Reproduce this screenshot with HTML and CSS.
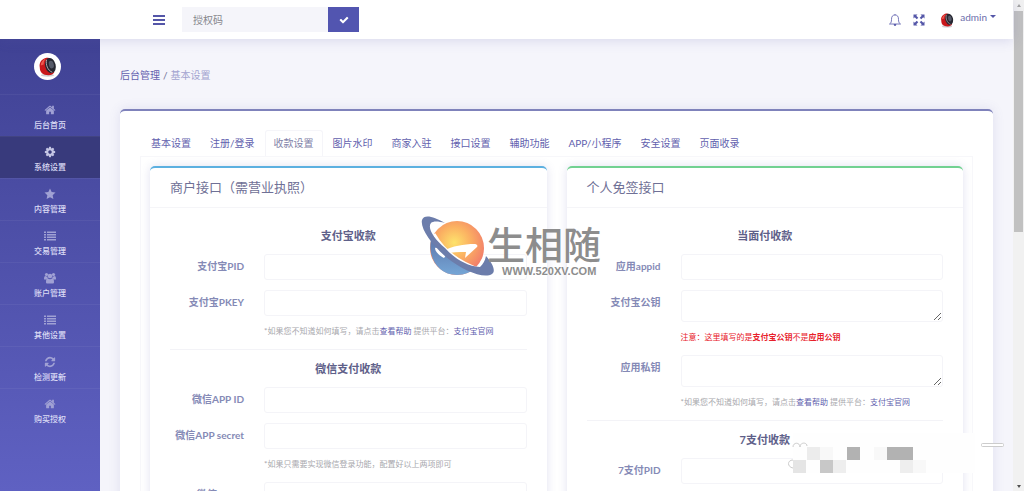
FILE: index.html
```html
<!DOCTYPE html>
<html lang="zh-CN">

<head>
    <meta charset="UTF-8">
    <meta name="viewport" content="width=device-width, initial-scale=1.0">
    <title>基本设置 - 后台管理</title>
    <link rel="stylesheet" href="styles.css">
</head>

<body>
    <!-- shared icons -->
    <svg class="sprite" aria-hidden="true">
        <symbol id="i-home" viewBox="0 0 1792 1792"><path d="M1472 992v480q0 26-19 45t-45 19h-384v-384h-256v384h-384q-26 0-45-19t-19-45v-480q0-1 .5-3t.5-3l575-474 575 474q1 2 1 6zm223-69l-62 74q-8 9-21 11h-3q-13 0-21-7l-692-577-692 577q-12 8-24 7-13-2-21-11l-62-74q-8-10-7-23.5t11-21.5l719-599q32-26 76-26t76 26l244 204v-195q0-14 9-23t23-9h192q14 0 23 9t9 23v408l219 182q10 8 11 21.5t-7 23.5z"/></symbol>
        <symbol id="i-cog" viewBox="0 0 1792 1792"><path d="M1152 896q0-106-75-181t-181-75-181 75-75 181 75 181 181 75 181-75 75-181zm512-109v222q0 12-8 23t-20 13l-185 28q-19 54-39 91 35 50 107 138 10 12 10 25t-9 23q-27 37-99 108t-94 71q-12 0-26-9l-138-108q-44 23-91 38-16 136-29 186-7 28-36 28h-222q-14 0-24.5-8.5t-11.5-21.5l-28-184q-49-16-90-37l-141 107q-10 9-25 9-14 0-25-11-126-114-165-168-7-10-7-23 0-12 8-23 15-21 51-66.5t54-70.5q-27-50-41-99l-183-27q-13-2-21-12.5t-8-23.5v-222q0-12 8-23t19-13l186-28q14-46 39-92-40-57-107-138-10-12-10-24 0-10 9-23 26-36 98.5-107.5t94.5-71.5q13 0 26 10l138 107q44-23 91-38 16-136 29-186 7-28 36-28h222q14 0 24.5 8.5t11.5 21.5l28 184q49 16 90 37l142-107q9-9 24-9 13 0 25 10 129 119 165 170 7 8 7 22 0 12-8 23-15 21-51 66.5t-54 70.5q26 50 41 98l183 28q13 2 21 12.5t8 23.5z"/></symbol>
        <symbol id="i-star" viewBox="0 0 24 24"><path d="M12 1l3.300 7.200 7.700.9-5.700 5.300 1.500 7.800L12 18.400l-6.800 3.800 1.500-7.800L1 9.100l7.700-.9z"/></symbol>
        <symbol id="i-list" viewBox="0 0 24 24"><path d="M0 3h4v3H0zM6 3h18v3H6zM0 8h4v3H0zM6 8h18v3H6zM0 13h4v3H0zM6 13h18v3H6zM0 18h4v3H0zM6 18h18v3H6z"/></symbol>
        <symbol id="i-users" viewBox="0 0 24 24"><circle cx="5" cy="5" r="3.200"/><circle cx="19" cy="5" r="3.200"/><circle cx="12" cy="8" r="4.500"/><path d="M0 14c0-4 1-6 3-6 1 1 2 1 4 1 0 2 0 3 1 4-2 0-3 1-4 2H2c-1 0-2 0-2-1zM24 14c0-4-1-6-3-6-1 1-2 1-4 1 0 2 0 3-1 4 2 0 3 1 4 2h2c1 0 2 0 2-1zM4 20c0-5 1-7 4-7 2 2 6 2 8 0 3 0 4 2 4 7 0 2-1 3-3 3H7c-2 0-3-1-3-3z"/></symbol>
        <symbol id="i-refresh" viewBox="0 0 1792 1792"><path d="M1639 1056q0 5-1 7-64 268-268 434.500t-478 166.500q-146 0-282.500-55t-243.500-157l-129 129q-19 19-45 19t-45-19-19-45v-448q0-26 19-45t45-19h448q26 0 45 19t19 45-19 45l-137 137q71 66 161 102t187 36q134 0 250-65t186-179q11-17 53-117 8-23 30-23h192q13 0 22.500 9.500t9.500 22.500zm25-800v448q0 26-19 45t-45 19h-448q-26 0-45-19t-19-45 19-45l138-138q-148-137-349-137-134 0-250 65t-186 179q-11 17-53 117-8 23-30 23h-199q-13 0-22.500-9.500t-9.500-22.500v-7q65-268 270-434.500t480-166.500q146 0 284 55.500t245 156.500l130-129q19-19 45-19t45 19 19 45z"/></symbol>
        <symbol id="i-check" viewBox="0 0 1792 1792"><path d="M1671 566q0 40-28 68l-724 724-136 136q-28 28-68 28t-68-28l-136-136-362-362q-28-28-28-68t28-68l136-136q28-28 68-28t68 28l294 295 656-657q28-28 68-28t68 28l136 136q28 28 28 68z"/></symbol>
        <symbol id="i-avatar" viewBox="0 0 28 28">
            <ellipse cx="14" cy="23" rx="7" ry="1.500" fill="#cfcfd4"/>
            <path d="M13 5c-5 1-8 5-7 10 0 5 3 8 9 8 3 0 5-1 6-3L15 5z" fill="#c8171b"/>
            <path d="M12 6c-3 1-5 4-5 7l3-1c0-3 1-5 2-6z" fill="#ee5a50"/>
            <ellipse cx="17" cy="13" rx="5.500" ry="8" transform="rotate(-14 17 13)" fill="#262731"/>
            <ellipse cx="18" cy="12" rx="2.500" ry="4" transform="rotate(-14 18 12)" fill="#555968"/>
            <path d="M13 7c-1 5 1 11 6 13" fill="none" stroke="#b9a9ae" stroke-width="1"/>
        </symbol>
    </svg>

    <div class="app">
        <header class="topbar">
            <button class="menu-toggle" type="button" aria-label="菜单"><span></span><span></span><span></span></button>
            <form class="search">
                <input type="text" placeholder="授权码" aria-label="授权码">
                <button type="button" aria-label="提交"><svg><use href="#i-check"/></svg></button>
            </form>
            <div class="tools">
                <button type="button" aria-label="通知">
                    <svg viewBox="0 0 24 24" fill="none" stroke="currentColor" stroke-width="1.600"><path d="M12 0v2M1 20h22c-3-2-4-4-4-9 0-6-2-9-7-9s-7 3-7 9c0 5-1 7-4 9z"/><path d="M10 21c0 3 4 3 4 0z" fill="currentColor"/></svg>
                </button>
                <button type="button" aria-label="全屏">
                    <svg viewBox="0 0 24 24" fill="currentColor"><path d="M1 1h8L6.500 3.500l4 4-3 3-4-4L1 9zM23 1v8l-2.500-2.500-4 4-3-3 4-4L15 1zM1 23v-8l2.500 2.500 4-4 3 3-4 4L9 23zM23 23h-8l2.500-2.500-4-4 3-3 4 4L23 15z"/></svg>
                </button>
                <button class="user" type="button"><svg><use href="#i-avatar"/></svg><span>admin</span><i class="caret"></i></button>
            </div>
        </header>

        <div class="layout">
            <nav class="sidebar">
                <div class="logo"><svg><use href="#i-avatar"/></svg></div>
                <a href="#"><svg><use href="#i-home"/></svg>后台首页</a>
                <a href="#" class="active"><svg><use href="#i-cog"/></svg>系统设置</a>
                <a href="#"><svg><use href="#i-star"/></svg>内容管理</a>
                <a href="#"><svg><use href="#i-list"/></svg>交易管理</a>
                <a href="#"><svg><use href="#i-users"/></svg>账户管理</a>
                <a href="#"><svg><use href="#i-list"/></svg>其他设置</a>
                <a href="#"><svg><use href="#i-refresh"/></svg>检测更新</a>
                <a href="#"><svg><use href="#i-home"/></svg>购买授权</a>
            </nav>

            <main class="content">
                <div class="breadcrumb"><a href="#">后台管理</a><span>/</span><em>基本设置</em></div>

                <section class="panel">
                    <nav class="tabs">
                        <a href="#">基本设置</a>
                        <a href="#">注册/登录</a>
                        <a href="#" class="active">收款设置</a>
                        <a href="#">图片水印</a>
                        <a href="#">商家入驻</a>
                        <a href="#">接口设置</a>
                        <a href="#">辅助功能</a>
                        <a href="#">APP/小程序</a>
                        <a href="#">安全设置</a>
                        <a href="#">页面收录</a>
                    </nav>

                    <div class="tab-content">
                        <div class="card blue">
                            <h2>商户接口（需营业执照）</h2>
                            <div class="card-body">
                                <h3>支付宝收款</h3>
                                <div class="row">
                                    <label for="ali-pid">支付宝PID</label>
                                    <div><input type="text" id="ali-pid"></div>
                                </div>
                                <div class="row">
                                    <label for="ali-pkey">支付宝PKEY</label>
                                    <div>
                                        <input type="text" id="ali-pkey">
                                        <p class="help">*如果您不知道如何填写，请点击<a href="#">查看帮助</a> 提供平台：<a href="#">支付宝官网</a></p>
                                    </div>
                                </div>
                                <hr>
                                <h3>微信支付收款</h3>
                                <div class="row">
                                    <label for="wx-id">微信APP ID</label>
                                    <div><input type="text" id="wx-id"></div>
                                </div>
                                <div class="row">
                                    <label for="wx-secret">微信APP secret</label>
                                    <div>
                                        <input type="text" id="wx-secret">
                                        <p class="help">*如果只需要实现微信登录功能，配置好以上两项即可</p>
                                    </div>
                                </div>
                                <div class="row">
                                    <label for="wx-mch">微信mchid</label>
                                    <div><input type="text" id="wx-mch"></div>
                                </div>
                            </div>
                        </div>

                        <div class="card green">
                            <h2>个人免签接口</h2>
                            <div class="card-body">
                                <h3>当面付收款</h3>
                                <div class="row">
                                    <label for="f2f-id">应用appid</label>
                                    <div><input type="text" id="f2f-id"></div>
                                </div>
                                <div class="row">
                                    <label for="f2f-pub">支付宝公钥</label>
                                    <div>
                                        <textarea id="f2f-pub"></textarea>
                                        <p class="help warn">注意：这里填写的是<b>支付宝公钥</b>不是<b>应用公钥</b></p>
                                    </div>
                                </div>
                                <div class="row">
                                    <label for="f2f-key">应用私钥</label>
                                    <div>
                                        <textarea id="f2f-key"></textarea>
                                        <p class="help">*如果您不知道如何填写，请点击<a href="#">查看帮助</a> 提供平台：<a href="#">支付宝官网</a></p>
                                    </div>
                                </div>
                                <hr>
                                <h3>7支付收款</h3>
                                <div class="row">
                                    <label for="pay7-id">7支付PID</label>
                                    <div><input type="text" id="pay7-id"></div>
                                </div>
                            </div>
                        </div>
                    </div>
                </section>
            </main>
        </div>
    </div>

    <div class="scrollbar" aria-hidden="true"><i class="up"></i><div class="thumb"></div><i class="down"></i></div>

    <!-- watermark -->
    <div class="watermark">
        <svg viewBox="0 0 76 66">
            <defs>
                <radialGradient id="sun" cx=".45" cy=".4" r=".6"><stop offset="0" stop-color="#fde36c"/><stop offset=".5" stop-color="#fbb062"/><stop offset="1" stop-color="#f27d6a"/></radialGradient>
                <linearGradient id="sea" x1="0" y1="0" x2="0" y2="1"><stop offset="0" stop-color="#5c73a8"/><stop offset="1" stop-color="#75a6d6"/></linearGradient>
            </defs>
            <circle cx="36" cy="34" r="27" fill="url(#sun)"/>
            <path d="M11 22C5 41 16 61 36 61c8 0 14-3 18-7C36 48 21 36 11 22z" fill="url(#sea)"/>
            <path d="M14 34c2-1 5 1 8 3 10-5 20-7 32-7 2 0 3 2 2 3l-12 11 1-6c-8 0-14 0-19 2l-3 4c-4-2-9-6-9-10z" fill="#fff"/>
            <path d="M13 20C23 38 39 49 60 56" fill="none" stroke="#fff" stroke-width="3"/>
            <path d="M24 9C12 2 3 0 1 6c-2 8 9 24 24 37 17 14 38 22 46 17 4-3 1-10-6-18-1 5-3 8-6 11-14-1-26-9-35-19C13 25 6 14 10 9c2-2 7-2 14 0z" fill="#6c7dab"/>
        </svg>
        <div><strong>生相随</strong><span>WWW.520XV.COM</span></div>
    </div>

    <!-- blurred badge -->
    <svg class="mosaic" viewBox="0 0 226 52">
        <path d="M13 0h182v40H13z" fill="#fefefe"/>
        <path d="M27 14h13v13H27z" fill="#ececec"/>
        <path d="M40 14h13v13H40zM94 14h13v13H94zM133 27h13v13h-13z" fill="#f8f8f8"/>
        <path d="M67 14h13v13H67zM107 14h26v13h-26z" fill="#b2b2b2"/>
        <path d="M13 27h13v13H13z" fill="#e5e5e5"/>
        <path d="M40 27h13v13H40z" fill="#c8c8c8"/>
        <path d="M53 27h13v13H53zM120 27h13v13h-13z" fill="#eee"/>
        <path d="M13 14c0-5 7-5 7 0 0-5 7-5 7-1M13 27c-6 0-6 7 0 8" fill="none" stroke="#ccc"/>
        <rect x="201.500" y="10.500" width="22" height="3" rx="1" fill="#fff" stroke="#ccc"/>
    </svg>
</body>

</html>
```

FILE: styles.css
```css
* {
    box-sizing: border-box;
}

body {
    margin: 0;
    height: 100vh;
    overflow: hidden;
    display: flex;
    position: relative;
    font-family: Lato, "Noto Sans CJK SC", sans-serif;
    font-size: 10px;
    color: #6f7096;
    background: #f5f5fb;
}

.sprite {
    position: absolute;
    width: 0;
    height: 0;
}

a {
    color: #625fae;
    text-decoration: none;
}

button,
input,
textarea {
    font: inherit;
    border: none;
    padding: 0;
}

button {
    background: none;
    color: #5456a8;
    cursor: pointer;
}

.app {
    flex: 1;
    min-width: 0;
    display: flex;
    flex-direction: column;
}

/* top bar */
.topbar {
    flex: none;
    height: 39px;
    display: flex;
    align-items: center;
    padding: 0 17px 0 153px;
    background: #fff;
    box-shadow: 0 1px 12px rgba(90, 90, 170, 0.2);
    position: relative;
    z-index: 2;
}

.menu-toggle {
    width: 12px;
    display: grid;
    gap: 2px;
    margin-right: 17px;
}

.menu-toggle span {
    height: 2px;
    background: #5456a8;
}

.search {
    display: flex;
    height: 25px;
}

.search input {
    width: 146px;
    padding: 0 11px;
    background: #f5f5fa;
}

.search input::placeholder {
    color: #85868c;
}

.search button {
    width: 31px;
    background: #5255b0;
    color: #fff;
}

.search svg {
    width: 10px;
    height: 10px;
    fill: currentColor;
    display: block;
    margin: 0 auto;
}

.tools {
    margin-left: auto;
    display: flex;
    align-items: center;
    gap: 12px;
}

.tools svg {
    width: 12px;
    height: 12px;
    display: block;
}

.tools .user {
    display: flex;
    align-items: center;
    gap: 3px;
}

.user svg {
    width: 20px;
    height: 20px;
}

.user span {
    line-height: 12px;
    margin-bottom: 6px;
    color: #6c6eab;
}

.caret {
    border: 3px solid transparent;
    border-top-color: #5456a8;
    border-bottom: none;
    margin-bottom: 6px;
}

/* sidebar */
.layout {
    flex: 1;
    min-height: 0;
    display: flex;
}

.sidebar {
    flex: 0 0 100px;
    background: linear-gradient(#404294, #5f61c2);
}

.logo {
    height: 55px;
    padding: 14px 0 0 34px;
}

.logo svg {
    display: block;
    width: 27px;
    height: 27px;
    background: #fff;
    border-radius: 50%;
}

.sidebar a {
    height: 42px;
    display: flex;
    flex-direction: column;
    align-items: center;
    justify-content: center;
    gap: 2px;
    padding-top: 4px;
    font-size: 8px;
    line-height: 14px;
    font-weight: 500;
    color: #dcdcf5;
    border-top: 1px solid rgba(255, 255, 255, 0.05);
}

.sidebar a svg {
    width: 12px;
    height: 12px;
    fill: #a0a1d4;
}

.sidebar a.active {
    background: #383a7c;
}

.sidebar a.active svg {
    fill: #c4c5e4;
}

/* main */
.content {
    flex: 1;
    min-width: 0;
    padding: 28px 20px;
}

.breadcrumb {
    display: flex;
    gap: 3px;
    height: 42px;
    line-height: 16px;
}

.breadcrumb em {
    font-style: normal;
    color: #a3a4d0;
}

.panel {
    background: #fff;
    border-top: 2px solid #7f82bb;
    border-radius: 5px;
    padding: 19px 20px;
    box-shadow: 0 0 12px rgba(90, 90, 170, 0.14);
}

.tabs {
    display: flex;
    gap: 1px;
    padding-left: 2px;
}

.tabs a {
    height: 26px;
    padding: 0 8px;
    line-height: 25px;
    border: 1px solid transparent;
    border-bottom: none;
    white-space: nowrap;
}

.tabs a.active {
    color: #8182a8;
    background: #fff;
    border-color: #f5f5f9;
    border-radius: 3px 3px 0 0;
    margin-bottom: -1px;
    z-index: 1;
}

.tab-content {
    display: grid;
    grid-template-columns: 1fr 1fr;
    gap: 20px;
    padding: 9px;
    border: 1px solid #f7f7fa;
}

.card {
    background: #fff;
    border-top: 2px solid #5cb0e0;
    border-radius: 5px;
    box-shadow: 0 0 10px rgba(90, 90, 170, 0.18);
}

.card.green {
    border-top-color: #72d191;
}

.card h2 {
    margin: 0;
    padding: 0 20px;
    font-size: 13px;
    font-weight: 400;
    line-height: 39px;
    border-bottom: 1px solid #f5f5f8;
}

.card-body {
    padding: 19px 20px;
}

.card h3 {
    margin: 0 0 9px;
    font-size: 11px;
    line-height: 18px;
    text-align: center;
    color: #5e6089;
}

.row {
    display: grid;
    grid-template-columns: 74px 1fr;
    gap: 20px;
    margin-bottom: 10px;
}

.row label {
    text-align: right;
    line-height: 25px;
    font-weight: 700;
    white-space: nowrap;
    color: #858ab6;
}

.row input,
.row textarea {
    display: block;
    width: 100%;
    height: 26px;
    border: 1px solid #f4f4f8;
    border-radius: 3px;
    background: #fff;
}

.row textarea {
    height: 32px;
    resize: vertical;
}

.help {
    margin: 7px 0 0;
    font-size: 8px;
    line-height: 16px;
    color: #a8a8ad;
}

.help.warn {
    color: #e8202a;
}

hr {
    margin: 0 0 10px;
    border: none;
    border-top: 1px solid #f3f3f7;
}

/* page scrollbar */
.scrollbar {
    flex: 0 0 11px;
    display: flex;
    flex-direction: column;
    align-items: center;
    background: #f1f1f1;
}

.thumb {
    width: 9px;
    height: 45%;
    margin-top: 4px;
    background: #c1c1c1;
}

.scrollbar i {
    border: 2px solid transparent;
}

.scrollbar .up {
    margin-top: 4px;
    border-bottom: 3px solid #a3a3a3;
    border-top: none;
}

.scrollbar .down {
    margin: auto 0 3px;
    border-top: 3px solid #505050;
    border-bottom: none;
}

/* overlays */
.watermark {
    position: absolute;
    left: 421px;
    top: 214px;
    z-index: 5;
    display: flex;
    pointer-events: none;
    color: #8d8d8d;
}

.watermark svg {
    width: 76px;
    height: 66px;
    margin-right: -10px;
}

.watermark div {
    display: grid;
    align-content: start;
    padding-top: 10px;
}

.watermark strong {
    font-size: 38px;
    line-height: 40px;
    font-weight: 500;
}

.watermark span {
    padding-left: 15px;
    font: bold 11px/14px "Liberation Sans", sans-serif;
}

.mosaic {
    position: absolute;
    left: 780px;
    top: 433px;
    z-index: 5;
    width: 226px;
    height: 52px;
    pointer-events: none;
}
```
